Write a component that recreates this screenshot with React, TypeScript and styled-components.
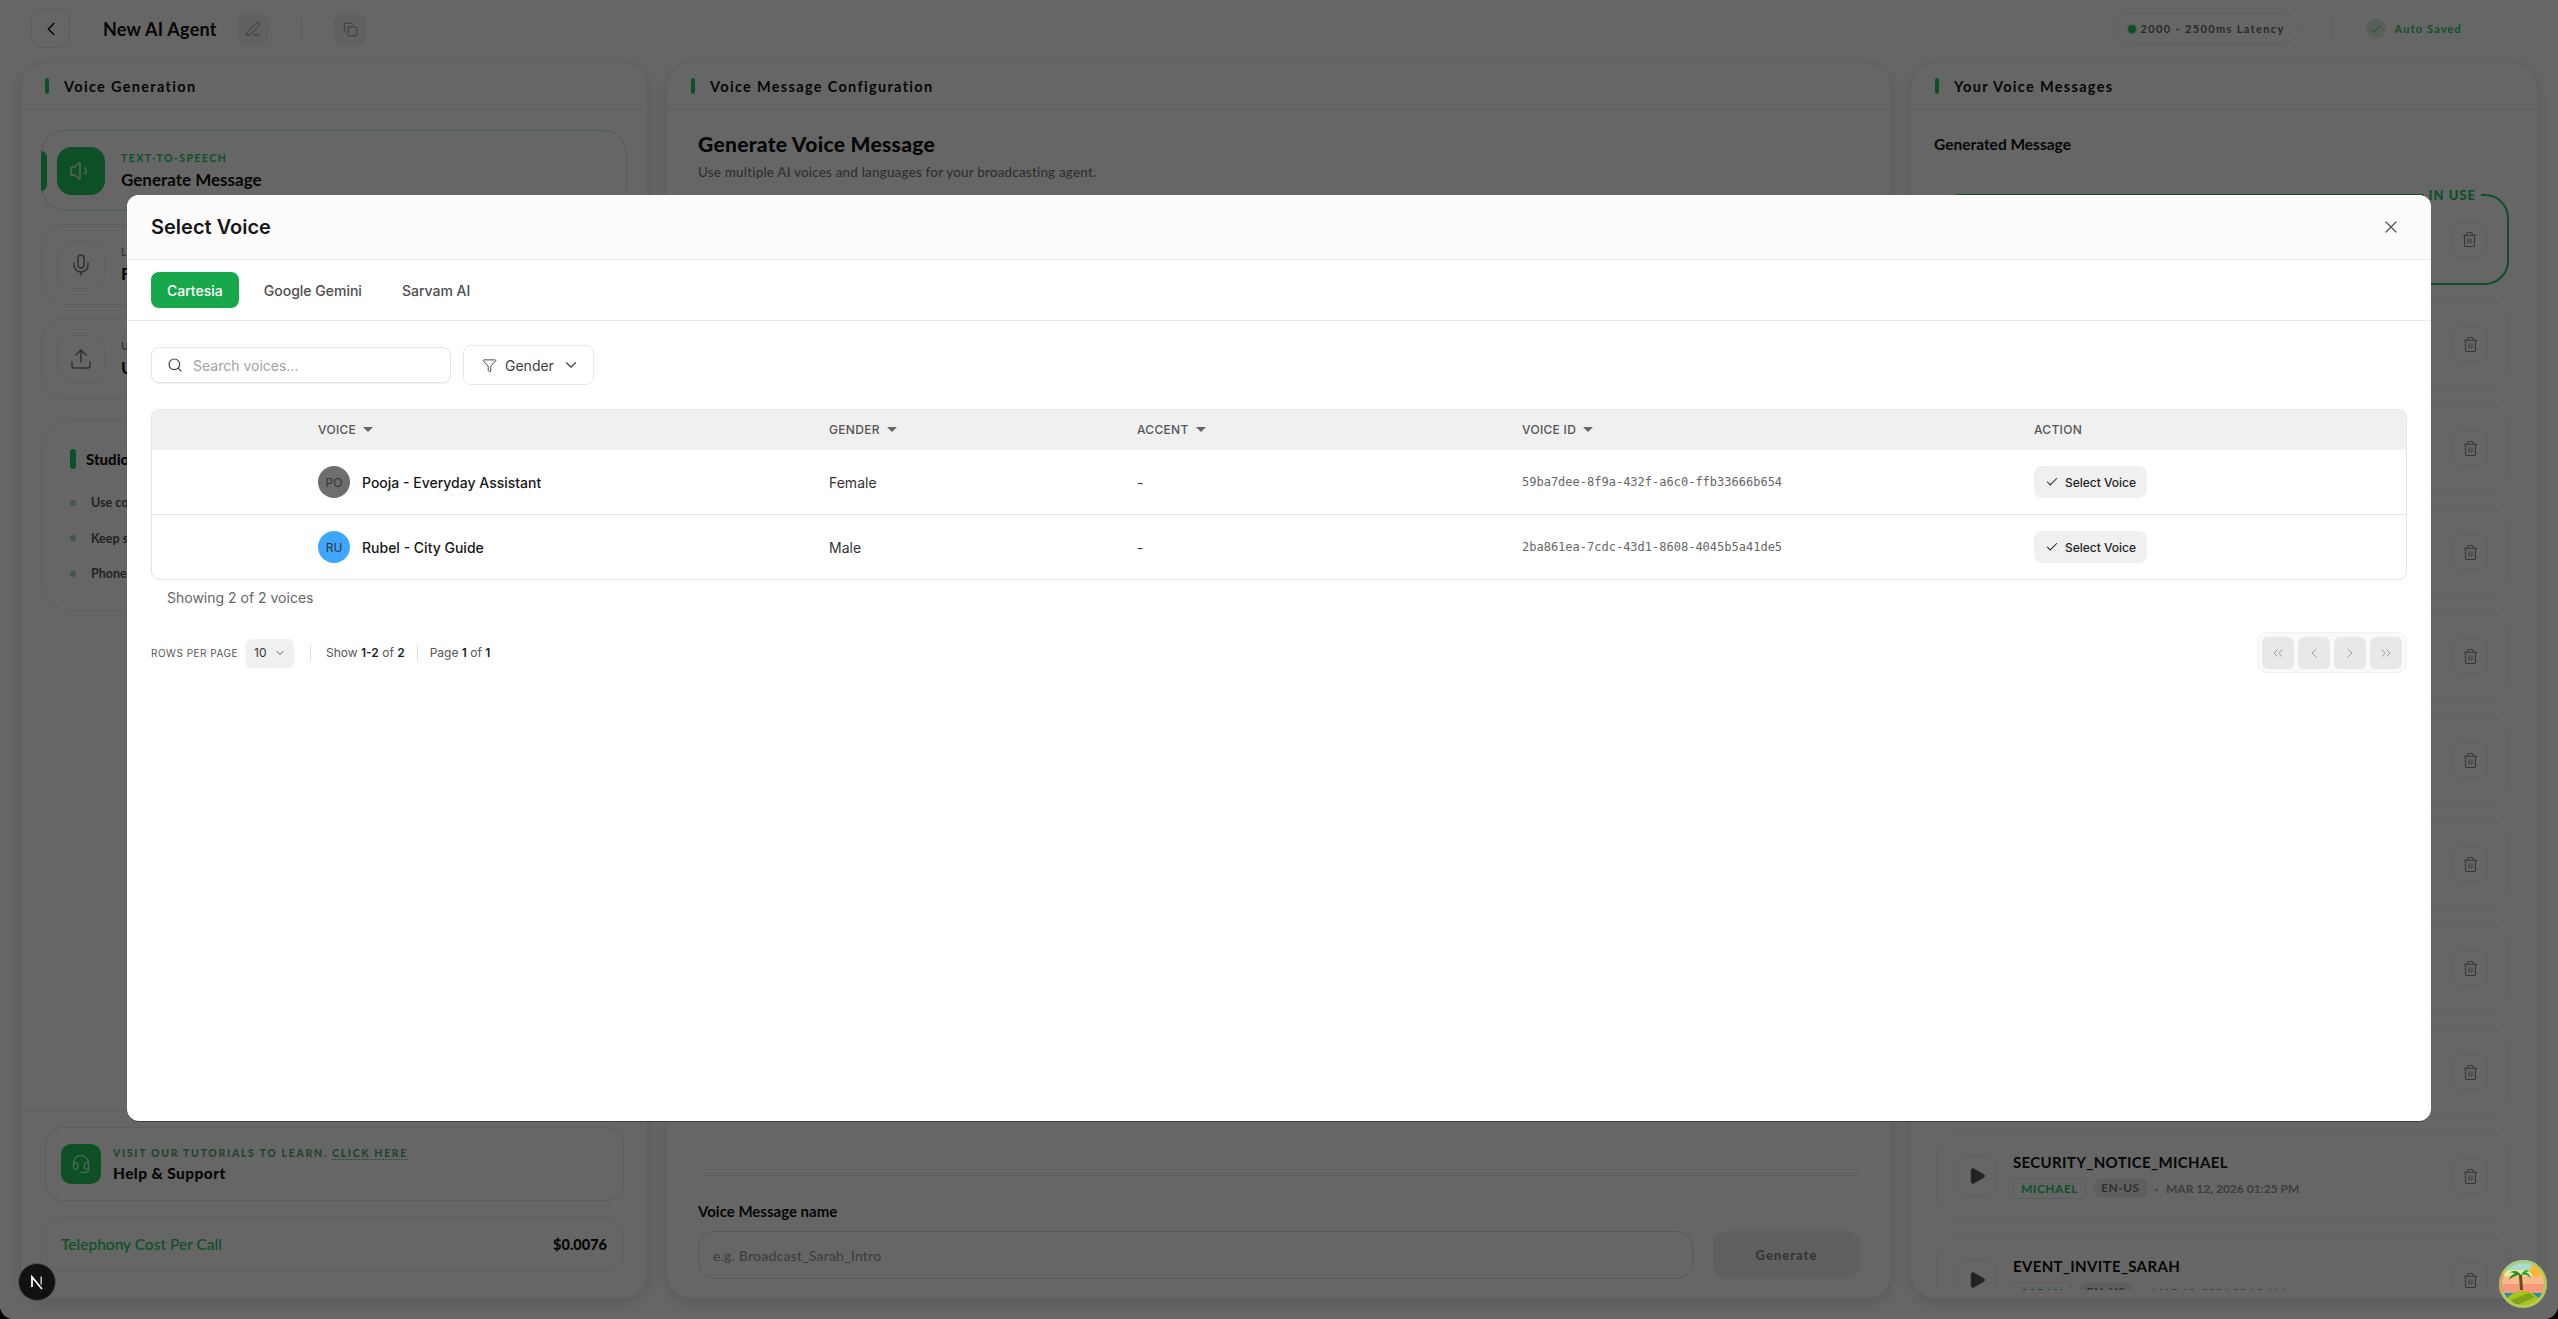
import React from "react";
import styled, { createGlobalStyle } from "styled-components";
import {
  Check, ChevronDown, ChevronLeft, ChevronRight, ChevronsLeft, ChevronsRight, Copy, Filter,
  Headset, Mic, PenLine, Play, Search, Trash2, Upload, Volume1, X,
} from "lucide-react";

const BRAND = "#25c95f";
const APP_FONT = `"Lato", "Open Sans", sans-serif`;
const UI_FONT = `"Inter", "Liberation Sans", sans-serif`;

const Global = createGlobalStyle`
  html, body { margin: 0; padding: 0; background: #000; }
  * { box-sizing: border-box; }
  body { font-family: ${APP_FONT}; color: #111; }
`;

const Page = styled.div`
  position: relative;
  width: 2558px;
  height: 1319px;
  display: flex;
  flex-direction: column;
  overflow: hidden;
  background: #fff;
  border-radius: 0 0 14px 14px;
`;

const TopBar = styled.header`
  height: 62px;
  flex: none;
  display: flex;
  align-items: flex-start;
  padding: 9px 96px 0 31px;
`;
const BackButton = styled.div`
  width: 39px;
  height: 39px;
  border: 1px solid #e8e8e8;
  border-radius: 12px;
  display: flex;
  align-items: center;
  justify-content: center;
  margin-right: 33px;
`;
const AgentName = styled.div`
  font-size: 18px;
  font-weight: 700;
  line-height: 40px;
  width: 134px;
  letter-spacing: 0.25px;
`;
const GhostIcon = styled.div`
  width: 32px;
  height: 32px;
  margin-top: 4px;
  border-radius: 9px;
  background: #f3f3f3;
  color: #888;
  display: flex;
  align-items: center;
  justify-content: center;
`;
const VDivider = styled.div<{ $mx: number }>`
  width: 1px;
  height: 24px;
  margin: 8px ${(p) => p.$mx}px 0;
  background: #e5e5e5;
`;
const Spacer = styled.div`
  flex: 1;
`;
const LatencyPill = styled.div`
  height: 31px;
  width: 185px;
  margin-top: 4px;
  border: 1px solid #eee;
  border-radius: 16px;
  display: flex;
  align-items: center;
  padding-left: 13px;
  gap: 5px;
  font-size: 11px;
  font-weight: 700;
  letter-spacing: 1.35px;
  color: #666;
`;
const LiveDot = styled.span`
  width: 8px;
  height: 8px;
  border-radius: 50%;
  background: ${BRAND};
  box-shadow: 0 0 0 2px rgba(37, 201, 95, 0.2);
`;
const SavedIcon = styled.div`
  width: 20px;
  height: 20px;
  margin-top: 10px;
  border-radius: 50%;
  background: #dcefe2;
  color: ${BRAND};
  display: flex;
  align-items: center;
  justify-content: center;
`;
const SavedText = styled.div`
  margin: 13px 0 0 9px;
  font-size: 11px;
  font-weight: 700;
  letter-spacing: 1.15px;
  color: ${BRAND};
`;

const Columns = styled.main`
  flex: 1;
  min-height: 0;
  display: grid;
  grid-template-columns: 628px 1226px 628px;
  gap: 18px;
  padding: 0 20px 20px;
`;
const Panel = styled.section`
  display: flex;
  flex-direction: column;
  min-height: 0;
  background: #fff;
  border: 1px solid #f0f0f0;
  border-radius: 26px;
  box-shadow: 0 4px 14px rgba(0, 0, 0, 0.12);
  overflow: hidden;
`;
const PanelHead = styled.div`
  height: 47px;
  flex: none;
  display: flex;
  align-items: center;
  gap: 15px;
  padding-left: 24px;
  border-bottom: 1px solid #ededed;
  font-size: 14.5px;
  font-weight: 700;
  letter-spacing: 1.32px;
`;
const HeadBar = styled.span`
  width: 4px;
  height: 16px;
  border-radius: 2px;
  background: ${BRAND};
`;

const LeftBody = styled.div`
  flex: 1;
  min-height: 0;
  padding: 20px 20px 0;
  display: flex;
  flex-direction: column;
  gap: 13px;
`;
const SourceCard = styled.div<{ $active?: boolean }>`
  position: relative;
  height: 81px;
  display: flex;
  align-items: center;
  gap: 16px;
  padding-left: 15px;
  border: 1px solid ${(p) => (p.$active ? "#bfe8cd" : "#eee")};
  border-radius: 24px;
`;
const ActiveMark = styled.span`
  position: absolute;
  left: -1px;
  top: 20px;
  width: 6px;
  height: 40px;
  border-radius: 0 6px 6px 0;
  background: ${BRAND};
`;
const SourceIcon = styled.div<{ $active?: boolean }>`
  width: 48px;
  height: 48px;
  border-radius: 14px;
  display: flex;
  align-items: center;
  justify-content: center;
  background: ${(p) => (p.$active ? BRAND : "#fff")};
  color: ${(p) => (p.$active ? "#cfe" : "#777")};
  border: 1px solid ${(p) => (p.$active ? BRAND : "#eee")};
`;
const SourceLabel = styled.div<{ $active?: boolean }>`
  font-size: 10.5px;
  font-weight: 700;
  line-height: 14px;
  letter-spacing: 1.45px;
  color: ${(p) => (p.$active ? BRAND : "#888")};
`;
const SourceTitle = styled.div`
  margin-top: 5px;
  font-size: 17px;
  font-weight: 700;
  line-height: 20px;
`;
const TipsCard = styled.div`
  margin-top: 8px;
  height: 191px;
  border: 1px solid #eee;
  border-radius: 30px;
  padding: 28px 28px 0;
`;
const TipsTitle = styled.div`
  display: flex;
  align-items: center;
  gap: 10px;
  margin-bottom: 16px;
  font-size: 15px;
  font-weight: 900;
  line-height: 20px;
`;
const TipsBar = styled.span`
  width: 6px;
  height: 20px;
  border-radius: 3px;
  background: ${BRAND};
`;
const TipRow = styled.div`
  display: flex;
  align-items: center;
  gap: 15px;
  height: 35.5px;
  font-size: 12.5px;
  font-weight: 700;
  color: #555;
`;
const TipDot = styled.span`
  width: 6px;
  height: 6px;
  border-radius: 50%;
  background: #a6d9b8;
`;

const LeftFoot = styled.div`
  flex: none;
  border-top: 1px solid #ededed;
  padding: 16px 23px 27px 24px;
  display: flex;
  flex-direction: column;
  gap: 16px;
`;
const HelpCard = styled.div`
  height: 74px;
  border: 1px solid #d9efe0;
  border-radius: 16px;
  display: flex;
  align-items: center;
  gap: 12px;
  padding-left: 15px;
`;
const HelpIcon = styled.div`
  width: 40px;
  height: 40px;
  border-radius: 10px;
  background: ${BRAND};
  color: #cfe;
  display: flex;
  align-items: center;
  justify-content: center;
`;
const HelpLabel = styled.div`
  font-size: 10.5px;
  font-weight: 900;
  letter-spacing: 1.67px;
  line-height: 14px;
  color: #62a878;
`;
const HelpLink = styled.span`
  border-bottom: 1px dotted ${BRAND};
  color: #62a878;
`;
const HelpTitle = styled.div`
  margin-top: 3px;
  font-size: 15.5px;
  font-weight: 900;
  line-height: 20px;
  letter-spacing: 0.4px;
`;
const CostCard = styled.div`
  height: 54px;
  border: 1px solid #eee;
  border-radius: 16px;
  padding: 0 16px 0 15px;
  display: flex;
  align-items: center;
  justify-content: space-between;
  font-size: 15.5px;
  font-weight: 500;
  color: ${BRAND};
`;
const CostValue = styled.span`
  font-size: 14.5px;
  font-weight: 900;
  color: #111;
`;

const MidBody = styled.div`
  flex: 1;
  min-height: 0;
  display: flex;
  flex-direction: column;
  padding: 21px 31px 19px;
`;
const MidTitle = styled.h2`
  margin: 0;
  font-size: 21px;
  font-weight: 900;
  line-height: 26px;
  letter-spacing: 0.3px;
`;
const MidSub = styled.p`
  margin: 6px 0 0;
  font-size: 13.5px;
  line-height: 18px;
  font-weight: 500;
  letter-spacing: 0.17px;
  color: #777;
`;
const MidForm = styled.div`
  margin-top: auto;
  border-top: 1px solid #eee;
  padding-top: 26px;
`;
const FieldLabel = styled.div`
  font-size: 15px;
  font-weight: 700;
  line-height: 18px;
  margin-bottom: 11px;
`;
const FieldRow = styled.div`
  display: flex;
  gap: 20px;
`;
const NameInput = styled.div`
  flex: 1;
  height: 48px;
  border: 1.5px solid #ddd;
  border-radius: 16px;
  padding-left: 14px;
  display: flex;
  align-items: center;
  font-size: 14px;
  font-weight: 500;
  letter-spacing: 0.2px;
  color: #9a9a9a;
`;
const GenerateButton = styled.div`
  width: 147px;
  height: 48px;
  border-radius: 12px;
  background: #f0f0f0;
  display: flex;
  align-items: center;
  justify-content: center;
  font-size: 13px;
  font-weight: 900;
  letter-spacing: 1px;
  color: #888;
`;

const RightIntro = styled.div`
  flex: none;
  height: 76px;
  padding: 24px 0 0 23px;
  font-size: 15.5px;
  font-weight: 700;
  line-height: 20px;
`;
const MessageList = styled.div`
  flex: 1;
  min-height: 0;
  margin: 0 0 8px;
  padding: 8px 28px 0 25px;
  display: flex;
  flex-direction: column;
  gap: 14px;
  overflow: hidden;
`;
const MessageCard = styled.div<{ $active?: boolean }>`
  position: relative;
  flex: none;
  height: ${(p) => (p.$active ? 91 : 90)}px;
  display: flex;
  align-items: center;
  padding: 0 20px;
  border: ${(p) => (p.$active ? `2px solid ${BRAND}` : "1px solid #f0f0f0")};
  border-radius: 24px;
`;
const InUseTag = styled.span`
  position: absolute;
  right: 26px;
  top: -10px;
  padding: 0 5px;
  background: #fff;
  font-size: 13px;
  line-height: 18px;
  font-weight: 900;
  letter-spacing: 1px;
  color: ${BRAND};
`;
const PlayButton = styled.div`
  width: 40px;
  height: 40px;
  margin-right: 16px;
  border: 1px solid #eee;
  border-radius: 12px;
  display: flex;
  align-items: center;
  justify-content: center;
  color: #555;
`;
const MessageInfo = styled.div`
  display: flex;
  flex-direction: column;
  gap: 6px;
  margin-top: -2px;
`;
const MessageName = styled.div`
  font-size: 15px;
  font-weight: 700;
  line-height: 20px;
  letter-spacing: 0.35px;
`;
const MetaRow = styled.div`
  display: flex;
  align-items: center;
  gap: 8px;
  font-size: 12px;
  font-weight: 700;
  color: #999;
`;
const VoiceTag = styled.span`
  height: 21px;
  line-height: 19px;
  padding: 0 7px;
  border: 1px solid #d9efe0;
  border-radius: 6px;
  letter-spacing: 0.5px;
  color: ${BRAND};
`;
const LangTag = styled.span`
  height: 20px;
  line-height: 20px;
  padding: 0 7px;
  border-radius: 6px;
  background: #eee;
  letter-spacing: 0.5px;
  color: #777;
`;
const DeleteButton = styled.div`
  width: 36px;
  height: 36px;
  margin-left: auto;
  border: 1px solid #eee;
  border-radius: 11px;
  display: flex;
  align-items: center;
  justify-content: center;
  color: #888;
`;

const Overlay = styled.div`
  position: absolute;
  inset: 0;
  padding-bottom: 3px;
  display: flex;
  align-items: center;
  justify-content: center;
  background: rgba(0, 0, 0, 0.6);
`;
const Modal = styled.div`
  width: 2304px;
  height: 926px;
  display: flex;
  flex-direction: column;
  overflow: hidden;
  background: #fff;
  border-radius: 12px;
  box-shadow: 0 1px 0 rgba(0, 0, 0, 0.35);
  font-family: ${UI_FONT};
`;
const ModalHead = styled.div`
  height: 65px;
  flex: none;
  display: flex;
  align-items: center;
  justify-content: space-between;
  padding: 0 30px 0 24px;
  background: #fcfcfc;
  border-bottom: 1px solid #eaeaea;
`;
const ModalTitle = styled.h2`
  margin: 0;
  font-size: 20px;
  font-weight: 600;
  color: #171717;
`;
const CloseButton = styled.div`
  display: flex;
  color: #555;
`;
const TabRow = styled.div`
  height: 61px;
  flex: none;
  display: flex;
  align-items: center;
  gap: 8px;
  padding: 0 24px;
  border-bottom: 1px solid #eaeaea;
`;
const Tab = styled.div<{ $active?: boolean }>`
  height: 36px;
  padding: 0 16px;
  margin-right: ${(p) => (p.$active ? 1 : 0)}px;
  display: flex;
  align-items: center;
  border-radius: 8px;
  font-size: 14px;
  font-weight: 500;
  background: ${(p) => (p.$active ? "#17a84b" : "transparent")};
  color: ${(p) => (p.$active ? "#fff" : "#4d4d4d")};
`;
const ModalBody = styled.div`
  flex: 1;
  min-height: 0;
  padding: 24px 24px 0;
`;
const FilterRow = styled.div`
  display: flex;
  align-items: center;
  gap: 12px;
  margin-bottom: 24px;
`;
const SearchBox = styled.div`
  width: 300px;
  height: 36px;
  display: flex;
  align-items: center;
  gap: 10px;
  padding-left: 15px;
  border: 1px solid #e3e3e3;
  border-radius: 8px;
  box-shadow: 0 1px 1px rgba(0, 0, 0, 0.06);
  font-size: 14px;
  color: #a3a3a3;
  svg { color: #444; }
`;
const GenderButton = styled.div`
  width: 131px;
  height: 40px;
  display: flex;
  align-items: center;
  gap: 8px;
  padding-left: 18px;
  border: 1px solid #e8e8e8;
  border-radius: 8px;
  font-size: 14px;
  color: #404040;
`;

const Table = styled.div`
  width: 2256px;
  height: 171px;
  border: 1px solid #e5e5e5;
  border-radius: 8px;
  overflow: hidden;
`;
const TableRowBase = styled.div`
  display: grid;
  grid-template-columns: 166px 511px 308px 385px 512px 1fr;
  align-items: center;
`;
const HeaderRow = styled(TableRowBase)`
  height: 40px;
  padding-bottom: 2px;
  background: #f0f0f0;
  font-size: 12px;
  font-weight: 500;
  letter-spacing: 0.3px;
  color: #555;
`;
const BodyRow = styled(TableRowBase)`
  height: 64px;
  font-size: 14px;
  line-height: 19px;
  color: #333;
  & + & { border-top: 1px solid #e5e5e5; height: 65px; }
`;
const SortHead = styled.div`
  display: flex;
  align-items: center;
  gap: 7px;
`;
const Caret = styled.span`
  width: 0;
  height: 0;
  border-left: 5px solid transparent;
  border-right: 5px solid transparent;
  border-top: 5px solid #666;
`;
const VoiceCell = styled.div`
  display: flex;
  align-items: center;
  gap: 12px;
  font-weight: 500;
  color: #171717;
`;
const Avatar = styled.span<{ $bg: string }>`
  width: 32px;
  height: 32px;
  border-radius: 50%;
  background: ${(p) => p.$bg};
  display: flex;
  align-items: center;
  justify-content: center;
  font-size: 12px;
  font-weight: 400;
  color: #333;
`;
const VoiceId = styled.div`
  font-family: "DejaVu Sans Mono", "Liberation Mono", monospace;
  font-size: 12px;
  color: #666;
`;
const SelectButton = styled.div`
  width: 113px;
  height: 32px;
  display: flex;
  align-items: center;
  justify-content: center;
  gap: 6px;
  border-radius: 8px;
  background: #f0f0f0;
  font-size: 12px;
  line-height: 15px;
  font-weight: 500;
  color: #1f1f1f;
`;
const ShowingText = styled.div`
  margin-top: 8px;
  padding-left: 16px;
  font-size: 14px;
  line-height: 20px;
  color: #666;
`;
const PagerRow = styled.div`
  display: flex;
  align-items: center;
  height: 41px;
  margin-top: 24px;
  font-size: 12px;
  color: #555;
`;
const RowsLabel = styled.span`
  font-size: 10px;
  letter-spacing: 0.5px;
  margin-right: 8px;
`;
const RowsSelect = styled.div`
  width: 48px;
  height: 28px;
  display: flex;
  align-items: center;
  gap: 8px;
  padding-left: 8px;
  border-radius: 6px;
  background: #f0f0f0;
  box-shadow: 0 1px 2px rgba(0, 0, 0, 0.08);
  color: #333;
`;
const PagerDivider = styled.span<{ $ml: number; $mr: number }>`
  width: 1px;
  height: 16px;
  margin: 0 ${(p) => p.$mr}px 0 ${(p) => p.$ml}px;
  background: #ddd;
`;
const PagerStrong = styled.b`
  font-weight: 600;
  color: #222;
`;
const PagerButtons = styled.div`
  margin-left: auto;
  height: 41px;
  display: flex;
  align-items: center;
  gap: 4px;
  padding: 0 4px;
  border: 1px solid #f0f0f0;
  border-radius: 10px;
  background: #fafafa;
`;
const PagerButton = styled.div`
  width: 32px;
  height: 32px;
  border-radius: 6px;
  background: #e8e8e8;
  color: #8a8a8a;
  display: flex;
  align-items: center;
  justify-content: center;
`;

const NextBadge = styled.div`
  position: absolute;
  left: 18px;
  top: 1263px;
  width: 38px;
  height: 38px;
  border-radius: 50%;
  background: #111;
  border: 1px solid #555;
  display: flex;
  align-items: center;
  justify-content: center;
`;
const DevAvatar = styled.div`
  position: absolute;
  left: 2499px;
  top: 1260px;
  width: 48px;
  height: 48px;
`;

const NextMark = () => (
  <svg width="20" height="20" viewBox="0 0 20 20" fill="none">
    <path d="M5 15V5l10 12" stroke="#fff" strokeWidth="1.8" />
    <path d="M14.2 4.5v8" stroke="#bbb" strokeWidth="1.6" />
  </svg>
);

const IslandBadge = () => (
  <svg width="48" height="48" viewBox="0 0 48 48">
    <defs>
      <clipPath id="islandClip"><circle cx="24" cy="24" r="21" /></clipPath>
    </defs>
    <circle cx="24" cy="24" r="24" fill="#b5c95a" />
    <path d="M4 12A24 24 0 0 1 24 0a24 24 0 0 1 15 5L24 3Z" fill="#9fd08a" />
    <path d="M0 24a24 24 0 0 1 3-11l3 2v16l-5 2Z" fill="#c9a66b" />
    <g clipPath="url(#islandClip)">
      <rect x="0" y="0" width="48" height="10" fill="#a8dcc8" />
      <rect x="0" y="10" width="48" height="6" fill="#f3e6a0" />
      <rect x="0" y="16" width="48" height="8" fill="#f9b98a" />
      <rect x="0" y="24" width="48" height="9" fill="#f59a7a" />
      <rect x="0" y="33" width="48" height="5" fill="#1f93a8" />
      <circle cx="38" cy="10" r="7" fill="#f7b733" />
      <path d="M3 48c3-11 12-17 21-17s17 6 21 17Z" fill="#a8c41e" />
      <path d="M12 40l18-7 6 4-20 9Z" fill="#7fa31a" />
      <path d="M20 15l3 0 1 15h-3Z" fill="#6b4a1e" />
      <path d="M22 15c-3-5-8-5-12-2 3-1 5 0 6 1-3 0-5 2-6 6 3-3 7-5 12-5Z" fill="#1f8f2c" />
      <path d="M22 15c2-5 6-6 10-3-3-1-4 0-5 1 3 0 4 2 5 5-3-3-6-4-10-3Z" fill="#2aa838" />
    </g>
  </svg>
);

const sources = [
  { label: "TEXT-TO-SPEECH", title: "Generate Message", Icon: Volume1, active: true },
  { label: "LIVE RECORDING", title: "From Microphone", Icon: Mic },
  { label: "UPLOAD AUDIO", title: "Upload File", Icon: Upload },
];
const tips = [
  "Use commas and periods to add natural pauses.",
  "Keep sentences short for clearer delivery.",
  "Phone numbers read best when spaced out.",
];
const messages = [
  ...Array.from({ length: 9 }, () => null),
  { name: "SECURITY_NOTICE_MICHAEL", voice: "MICHAEL", date: "MAR 12, 2026 01:25 PM" },
  { name: "EVENT_INVITE_SARAH", voice: "SARAH", date: "MAR 12, 2026 09:10 AM" },
];
const voices = [
  { initials: "PO", color: "#6e6d70", name: "Pooja - Everyday Assistant", gender: "Female", id: "59ba7dee-8f9a-432f-a6c0-ffb33666b654" },
  { initials: "RU", color: "#3fa6ff", name: "Rubel - City Guide", gender: "Male", id: "2ba861ea-7cdc-43d1-8608-4045b5a41de5" },
];

export default function App() {
  return (
    <>
      <Global />
      <Page>
        <TopBar>
          <BackButton><ChevronLeft size={22} strokeWidth={1.75} /></BackButton>
          <AgentName>New AI Agent</AgentName>
          <GhostIcon><PenLine size={16} strokeWidth={1.5} /></GhostIcon>
          <VDivider $mx={32} />
          <GhostIcon><Copy size={15} strokeWidth={1.5} /></GhostIcon>
          <Spacer />
          <LatencyPill><LiveDot />2000 - 2500ms Latency</LatencyPill>
          <VDivider $mx={33} />
          <SavedIcon><Check size={13} strokeWidth={1.75} /></SavedIcon>
          <SavedText>Auto Saved</SavedText>
        </TopBar>
        <Columns>
          <Panel>
            <PanelHead><HeadBar />Voice Generation</PanelHead>
            <LeftBody>
              {sources.map(({ label, title, Icon, active }) => (
                <SourceCard key={label} $active={active}>
                  {active && <ActiveMark />}
                  <SourceIcon $active={active}><Icon size={24} strokeWidth={1.5} /></SourceIcon>
                  <div>
                    <SourceLabel $active={active}>{label}</SourceLabel>
                    <SourceTitle>{title}</SourceTitle>
                  </div>
                </SourceCard>
              ))}
              <TipsCard>
                <TipsTitle><TipsBar />Studio Tips</TipsTitle>
                {tips.map((t) => (
                  <TipRow key={t}><TipDot />{t}</TipRow>
                ))}
              </TipsCard>
            </LeftBody>
            <LeftFoot>
              <HelpCard>
                <HelpIcon><Headset size={20} strokeWidth={1.5} /></HelpIcon>
                <div>
                  <HelpLabel>VISIT OUR TUTORIALS TO LEARN. <HelpLink>CLICK HERE</HelpLink></HelpLabel>
                  <HelpTitle>Help &amp; Support</HelpTitle>
                </div>
              </HelpCard>
              <CostCard>Telephony Cost Per Call<CostValue>$0.0076</CostValue></CostCard>
            </LeftFoot>
          </Panel>
          <Panel>
            <PanelHead><HeadBar />Voice Message Configuration</PanelHead>
            <MidBody>
              <MidTitle>Generate Voice Message</MidTitle>
              <MidSub>Use multiple AI voices and languages for your broadcasting agent.</MidSub>
              <MidForm>
                <FieldLabel>Voice Message name</FieldLabel>
                <FieldRow>
                  <NameInput>e.g. Broadcast_Sarah_Intro</NameInput>
                  <GenerateButton>Generate</GenerateButton>
                </FieldRow>
              </MidForm>
            </MidBody>
          </Panel>
          <Panel>
            <PanelHead><HeadBar />Your Voice Messages</PanelHead>
            <RightIntro>Generated Message</RightIntro>
            <MessageList>
              {messages.map((m, i) => (
                <MessageCard key={i} $active={i === 0}>
                  {i === 0 && <InUseTag>IN USE</InUseTag>}
                  {m && (
                    <>
                      <PlayButton><Play size={20} fill="currentColor" strokeWidth={1} /></PlayButton>
                      <MessageInfo>
                        <MessageName>{m.name}</MessageName>
                        <MetaRow>
                          <VoiceTag>{m.voice}</VoiceTag>
                          <LangTag>EN-US</LangTag>
                          ·
                          <span>{m.date}</span>
                        </MetaRow>
                      </MessageInfo>
                    </>
                  )}
                  <DeleteButton><Trash2 size={17} strokeWidth={1.5} /></DeleteButton>
                </MessageCard>
              ))}
            </MessageList>
          </Panel>
        </Columns>
        <Overlay>
          <Modal>
            <ModalHead>
              <ModalTitle>Select Voice</ModalTitle>
              <CloseButton><X size={20} strokeWidth={1.5} /></CloseButton>
            </ModalHead>
            <TabRow>
              <Tab $active>Cartesia</Tab>
              <Tab>Google Gemini</Tab>
              <Tab>Sarvam AI</Tab>
            </TabRow>
            <ModalBody>
              <FilterRow>
                <SearchBox><Search size={16} strokeWidth={1.75} />Search voices...</SearchBox>
                <GenderButton>
                  <Filter size={15} strokeWidth={1.5} />
                  Gender
                  <ChevronDown size={18} strokeWidth={1.5} />
                </GenderButton>
              </FilterRow>
              <Table>
                <HeaderRow>
                  <span />
                  <SortHead>VOICE <Caret /></SortHead>
                  <SortHead>GENDER <Caret /></SortHead>
                  <SortHead>ACCENT <Caret /></SortHead>
                  <SortHead>VOICE ID <Caret /></SortHead>
                  <span>ACTION</span>
                </HeaderRow>
                {voices.map((v) => (
                  <BodyRow key={v.id}>
                    <span />
                    <VoiceCell><Avatar $bg={v.color}>{v.initials}</Avatar>{v.name}</VoiceCell>
                    <span>{v.gender}</span>
                    <span>-</span>
                    <VoiceId>{v.id}</VoiceId>
                    <SelectButton><Check size={14} strokeWidth={1.75} />Select Voice</SelectButton>
                  </BodyRow>
                ))}
              </Table>
              <ShowingText>Showing 2 of 2 voices</ShowingText>
              <PagerRow>
                <RowsLabel>ROWS PER PAGE</RowsLabel>
                <RowsSelect>10<ChevronDown size={12} strokeWidth={1.5} /></RowsSelect>
                <PagerDivider $ml={16} $mr={15} />
                <span>Show <PagerStrong>1-2</PagerStrong> of <PagerStrong>2</PagerStrong></span>
                <PagerDivider $ml={12} $mr={12} />
                <span>Page <PagerStrong>1</PagerStrong> of <PagerStrong>1</PagerStrong></span>
                <PagerButtons>
                  <PagerButton><ChevronsLeft size={16} strokeWidth={1.25} /></PagerButton>
                  <PagerButton><ChevronLeft size={16} strokeWidth={1.25} /></PagerButton>
                  <PagerButton><ChevronRight size={16} strokeWidth={1.25} /></PagerButton>
                  <PagerButton><ChevronsRight size={16} strokeWidth={1.25} /></PagerButton>
                </PagerButtons>
              </PagerRow>
            </ModalBody>
          </Modal>
        </Overlay>
        <NextBadge><NextMark /></NextBadge>
        <DevAvatar><IslandBadge /></DevAvatar>
      </Page>
    </>
  );
}
